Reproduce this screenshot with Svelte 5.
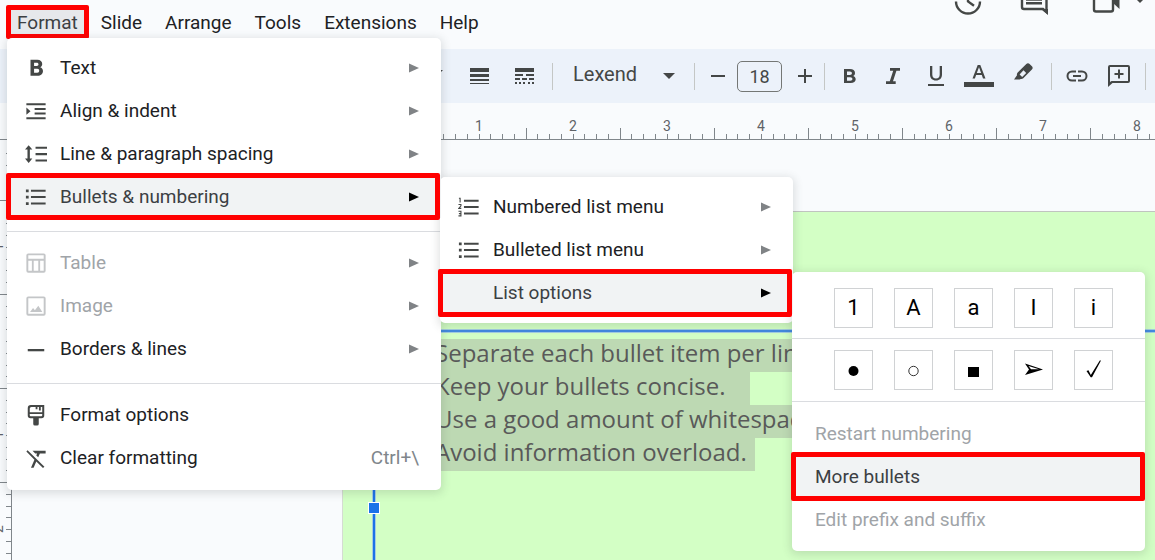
<script>
  const menus = ['Format', 'Slide', 'Arrange', 'Tools', 'Extensions', 'Help'];

  const formatMenu = [
    [
      { icon: 'bold', label: 'Text', sub: true },
      { icon: 'indent', label: 'Align & indent', sub: true },
      { icon: 'spacing', label: 'Line & paragraph spacing', sub: true },
      { icon: 'bullets', label: 'Bullets & numbering', sub: true, active: true }
    ],
    [
      { icon: 'table', label: 'Table', sub: true, disabled: true },
      { icon: 'image', label: 'Image', sub: true, disabled: true },
      { icon: 'line', label: 'Borders & lines', sub: true }
    ],
    [
      { icon: 'brush', label: 'Format options' },
      { icon: 'clear', label: 'Clear formatting', keys: 'Ctrl+\\' }
    ]
  ];

  const listMenu = [
    [
      { icon: 'numbers', label: 'Numbered list menu', sub: true },
      { icon: 'bullets', label: 'Bulleted list menu', sub: true },
      { icon: 'none', label: 'List options', sub: true, active: true }
    ]
  ];

  const optionItems = [
    { label: 'Restart numbering', disabled: true },
    { label: 'More bullets', active: true },
    { label: 'Edit prefix and suffix', disabled: true }
  ];

  const numerals = ['1', 'A', 'a', 'I', 'i'];
  const shapes = ['disc', 'circle', 'square', 'arrow', 'check'];

  const lines = [
    'Separate each bullet item per line.',
    'Keep your bullets concise.',
    'Use a good amount of whitespace.',
    'Avoid information overload.'
  ];

  const inch = 94.1;
  const hTicks = Array.from({ length: 140 }, (_, i) => i - 30).map((i) => ({
    pos: Math.round(384.4 + (i * inch) / 8),
    half: Math.abs(i % 8) === 4
  }));
  const vTicks = Array.from({ length: 100 }, (_, i) => i - 16).map((i) => ({
    pos: Math.round(201 + (i * inch) / 8),
    half: Math.abs(i % 8) === 4
  }));
  const hNumbers = [1, 2, 3, 4, 5, 6, 7, 8];
  const vNumbers = [-1, 1, 2];
</script>

{#snippet icon(name)}
  <svg class="icon" viewBox="0 0 24 24" aria-hidden="true">
    {#if name === 'bold'}
      <path fill-rule="evenodd" d="M6 3h7.500c3.200 0 5.300 1.800 5.300 4.600 0 1.700-.9 2.900-2.200 3.600 1.800.6 3 2.100 3 4.100 0 3.200-2.300 5.200-5.800 5.200H6zM9.900 6.300v3.500h2.900c1.200 0 1.900-.7 1.900-1.800s-.7-1.700-1.900-1.700zM9.900 12.900v4.200h3.500c1.300 0 2.100-.8 2.100-2.100s-.8-2.100-2.100-2.100z" />
    {:else if name === 'indent'}
      <path d="M1.500 3.500h21v2.200h-21zM10.500 8.600h12v2.200h-12zM10.500 13.700h12v2.200h-12zM1.500 18.800h21V21h-21zM1.500 8.200l4.500 4-4.500 4z" />
    {:else if name === 'spacing'}
      <path d="M11.500 4h12.500v2.300H11.500zM11.500 11h12.500v2.300H11.500zM11.500 18h12.500v2.300H11.500zM4 2.500l4 4.700H5.300v9.800H8l-4 4.700L0 17h2.700V7.200H0z" />
    {:else if name === 'bullets'}
      <path d="M6.500 4h16v2.200h-16zM6.500 11h16v2.200h-16zM6.500 18h16v2.200h-16zM1 3.700h3v3H1zM1 10.700h3v3H1zM1 17.700h3v3H1z" />
    {:else if name === 'numbers'}
      <path d="M6.500 4h16v2.200h-16zM6.500 11h16v2.200h-16zM6.500 18h16v2.200h-16z" />
      <path class="stroke-thin" d="M1 2.500h1.300V7M.5 9.300h2.700v1.400L.8 13.500h2.800M.5 16.700h2.700v5H.5M1 19.200h2" />
    {:else if name === 'table'}
      <path fill-rule="evenodd" d="M3.500 1.500h17a2 2 0 0 1 2 2v17a2 2 0 0 1-2 2h-17a2 2 0 0 1-2-2v-17a2 2 0 0 1 2-2zM3.600 3.600v3.800h16.800V3.600zM3.600 9.500v10.900h3.900V9.500zM9.500 9.500v10.900h5V9.500zM16.500 9.500v10.900h3.900V9.500z" />
    {:else if name === 'image'}
      <path fill-rule="evenodd" d="M3.500 1.500h17a2 2 0 0 1 2 2v17a2 2 0 0 1-2 2h-17a2 2 0 0 1-2-2v-17a2 2 0 0 1 2-2zM3.600 3.600v16.800h16.800V3.600zM5.500 18.500l3.300-4.300 2 2.500 3.700-4.900 4.400 6.700z" />
    {:else if name === 'line'}
      <path d="M3 12h18v2.500H3z" />
    {:else if name === 'brush'}
      <path fill-rule="evenodd" d="M6.500 1h14.500v11.500a3 3 0 0 1-3 3h-3v6.200a1.800 1.800 0 0 1-1.800 1.800h-2.400a1.800 1.800 0 0 1-1.800-1.800v-6.200H6a3 3 0 0 1-3-3V4.500A3.500 3.500 0 0 1 6.500 1zM5.200 9h13.600V3.200h-1.600V7h-2V3.200h-1.600v2.400h-2V3.200H7a1.800 1.800 0 0 0-1.800 1.800zM5.200 11v1.300c0 .6.400 1 1 1h11.600c.6 0 1-.4 1-1V11z" />
    {:else if name === 'clear'}
      <path d="M2.800 3.500l18.400 18-1.600 1.500-7.300-7.200-2.900 6.700H6.500l3.800-8.700L1.500 5zM8.200 4h14.300v3h-6.300l-1.800 4.300-2.100-2.100L13.200 7h-2z" />
    {/if}
  </svg>
{/snippet}

{#snippet menuRow(item)}
  <button class="row" class:active={item.active} disabled={item.disabled} role="menuitem" aria-haspopup={item.sub ? 'menu' : undefined}>
    {@render icon(item.icon)}
    <span class="label">{item.label}</span>
    {#if item.sub}
      <svg class="more" viewBox="0 0 10 10" aria-hidden="true"><path d="M0 .5L10 5 0 9.500z" /></svg>
    {/if}
    {#if item.keys}<kbd>{item.keys}</kbd>{/if}
  </button>
{/snippet}

<div class="app">
  <header>
    <nav aria-label="Menu bar">
      {#each menus as menu, i}
        <button class="menu-name" class:open={i === 0}>{menu}</button>
      {/each}
    </nav>
    <div class="actions">
      <button aria-label="Version history">
        <svg width="28" height="16" viewBox="0 0 28 16">
          <path class="stroke" d="M2 1.500a12 12 0 0 0 24 0M14-6v7.500l6 4.300" />
        </svg>
      </button>
      <button aria-label="Comments">
        <svg width="28" height="16" viewBox="0 0 28 16">
          <path class="stroke" d="M2-4v11a2 2 0 0 0 2 2h19l3.500 3V-4M6 3.300h16M6-.5h16" />
          <path d="M21 9h7v6z" />
        </svg>
      </button>
      <button aria-label="Join a call">
        <svg width="28" height="16" viewBox="0 0 28 16">
          <path class="stroke" d="M2-6V9.500a2 2 0 0 0 2 2h15a2 2 0 0 0 2-2V-6" />
          <path d="M21-4v7l6.500 6V-4z" />
        </svg>
        <svg class="tip" width="12" height="16" viewBox="0 0 12 16"><path d="M0-3h12L6 3z" /></svg>
      </button>
    </div>
  </header>

  <div class="toolbar" role="toolbar" aria-label="Formatting">
    <button class="tool drop" aria-label="Border options">
      <svg width="12" height="6" viewBox="0 0 12 6"><path d="M0 0h12L6 6z" /></svg>
    </button>
    <button class="tool wide" aria-label="Border weight">
      <svg width="20" height="18" viewBox="0 0 20 18"><path d="M0 1h19v4H0zM0 7h19v3H0zM0 12h19v2H0zM0 16h19v1H0z" /></svg>
    </button>
    <button class="tool wide" aria-label="Border dash">
      <svg width="20" height="18" viewBox="0 0 20 18"><path d="M0 1h19v4H0zM0 7h8v2H0zM11 7h8v2h-8zM0 11h5v2H0zM7 11h5v2H7zM14 11h5v2h-5zM0 15h2v2H0zM4 15h2v2H4zM8 15h2v2H8zM13 15h2v2h-2zM17 15h2v2h-2z" /></svg>
    </button>
    <span class="bar"></span>
    <div class="font">
      <select aria-label="Font"><option>Lexend</option></select>
      <svg width="12" height="6" viewBox="0 0 12 6" aria-hidden="true"><path d="M0 0h12L6 6z" /></svg>
    </div>
    <span class="bar"></span>
    <button class="tool step" aria-label="Decrease font size">
      <svg width="14" height="14" viewBox="0 0 14 14"><path d="M0 6h14v2H0z" /></svg>
    </button>
    <input class="size" aria-label="Font size" value="18" />
    <button class="tool step plus" aria-label="Increase font size">
      <svg width="14" height="14" viewBox="0 0 14 14"><path d="M0 6h6V0h2v6h6v2H8v6H6V8H0z" /></svg>
    </button>
    <span class="bar"></span>
    <button class="tool bold" aria-label="Bold">
      <svg width="12" height="16" viewBox="0 0 12 16"><path fill-rule="evenodd" d="M0 1h6c3 0 5 1.500 5 4 0 1.500-.7 2.500-1.800 3 1.500.5 2.500 1.700 2.500 3.300 0 2.400-2 3.700-5 3.700H0zM3 3.400v3.500h2.900c1.300 0 2-.7 2-1.700s-.7-1.800-2-1.800zM3 9.200v3.500h3.300c1.300 0 2.100-.7 2.100-1.700 0-1.100-.8-1.800-2.100-1.800z" /></svg>
    </button>
    <button class="tool" aria-label="Italic">
      <svg width="14" height="18" viewBox="0 0 14 18"><path d="M4 1h10v2.700h-3.600L7 14.300h2.700V17H0v-2.700h3.800L7.200 3.700H4z" /></svg>
    </button>
    <button class="tool" aria-label="Underline">
      <svg width="16" height="20" viewBox="0 0 16 20"><path d="M0 18h16v2H0zM2 0h2.300v8.500c0 2.500 1.300 4 3.700 4s3.700-1.500 3.700-4V0H14v8.600c0 3.800-2.300 6-6 6s-6-2.200-6-6z" /></svg>
    </button>
    <button class="tool color" aria-label="Text color">
      <svg width="30" height="22" viewBox="0 0 30 22"><path d="M0 17h30v5H0z" /><path fill-rule="evenodd" d="M13.700 0h2.600l5.200 13.500h-2.500l-1.200-3.400h-5.700l-1.200 3.400H8.500zM12.800 8.100h4.300L15 2.200z" /></svg>
    </button>
    <button class="tool highlight" aria-label="Highlight color">
      <svg width="20" height="24" viewBox="0 0 20 24"><path fill-rule="evenodd" d="M0 16.500l3-4.300c-.3-1 0-1.800.7-2.600L12.300 1c1-1 2.400-1 3.300 0l2.300 2.300c1 1 1 2.300 0 3.300l-8.600 8.700c-.8.700-1.700 1-2.600.7l-1 .5zM6.700 10.200l-1.100 1.200 2.600 2.600 4-4-2.700-2.700z" /></svg>
    </button>
    <span class="bar"></span>
    <button class="tool link" aria-label="Insert link">
      <svg width="22" height="12" viewBox="0 0 22 12"><path d="M10 .5v2H6a3.500 3.500 0 0 0 0 7h4v2H6a5.500 5.500 0 0 1 0-11zM12 .5h4a5.500 5.500 0 0 1 0 11h-4v-2h4a3.500 3.500 0 0 0 0-7h-4zM7 5h8v2H7z" /></svg>
    </button>
    <button class="tool link" aria-label="Add comment">
      <svg width="22" height="22" viewBox="0 0 22 22"><path fill-rule="evenodd" d="M2 0h18a2 2 0 0 1 2 2v14a2 2 0 0 1-2 2H4.500L0 22V2a2 2 0 0 1 2-2zM2 2v15l1.500-1H20V2z" /><path d="M10 4.500h2V8h3.500v2H12v3.500h-2V10H6.500V8H10z" /></svg>
    </button>
    <span class="bar"></span>
  </div>

  <svg class="ruler" aria-hidden="true">
    <rect x="0" y="36" width="100%" height="1" />
    {#each hTicks as t}
      <rect x={t.pos} y={t.half ? 25 : 31} width="1" height={t.half ? 11 : 5} />
    {/each}
    {#each hNumbers as n}
      <text x={Math.round(384.4 + n * inch)} y="28" text-anchor="middle">{n}</text>
    {/each}
  </svg>

  <div class="workspace">
    <svg class="side" aria-hidden="true">
      <rect x="11" y="0" width="1" height="100%" />
      {#each vTicks as t}
        <rect x={t.half ? 0 : 6} y={t.pos} width={t.half ? 11 : 5} height="1" />
      {/each}
      {#each vNumbers as n}
        <text transform="translate(3 {Math.round(201 + n * inch)}) rotate(-90)" text-anchor="middle">{Math.abs(n)}</text>
      {/each}
    </svg>
    <main>
      <div class="slide">
        <div class="textbox">
          <span class="handle"></span>
          {#each lines as line}
            <p><span>{line}</span></p>
          {/each}
        </div>
      </div>
    </main>
  </div>

  <div class="popup format" role="menu" aria-label="Format">
    {#each formatMenu as group}
      <div class="group">
        {#each group as item}{@render menuRow(item)}{/each}
      </div>
    {/each}
  </div>

  <div class="popup lists" role="menu" aria-label="Bullets and numbering">
    {#each listMenu as group}
      <div class="group">
        {#each group as item}{@render menuRow(item)}{/each}
      </div>
    {/each}
  </div>

  <div class="popup options" role="menu" aria-label="List options">
    <div class="palette">
      {#each numerals as n}<button class="cell">{n}</button>{/each}
    </div>
    <div class="palette">
      {#each shapes as s}
        <button class="cell" aria-label={s}>
          <svg width="21" height="22" viewBox="0 0 21 22">
            {#if s === 'disc'}<circle cx="10.500" cy="12" r="5" />
            {:else if s === 'circle'}<circle class="hollow" cx="10.500" cy="12" r="4.700" />
            {:else if s === 'square'}<path d="M5 8h11v10H5z" />
            {:else if s === 'arrow'}<path fill-rule="evenodd" d="M2 4.500l18 6L2 16l4-5.500zM5.500 7l2.500 3.200h8z" />
            {:else}<path d="M3.500 12l2-.8 2.300 4.900L16.800 1.500H18L9 18.200H7.700z" />{/if}
          </svg>
        </button>
      {/each}
    </div>
    <div class="choices">
      {#each optionItems as item}
        <button class="row" class:active={item.active} disabled={item.disabled} role="menuitem">
          <span class="label">{item.label}</span>
        </button>
      {/each}
    </div>
  </div>
</div>

<style>
  :global(body) {
    margin: 0;
  }
  .app {
    position: relative;
    display: flex;
    flex-direction: column;
    height: 100vh;
    overflow: hidden;
    background: #f9fbfd;
    color: #202124;
    font: 19px/24px Roboto, sans-serif;
  }
  button,
  input,
  select {
    box-sizing: border-box;
    margin: 0;
    padding: 0;
    border: 0;
    background: none;
    color: inherit;
    font: inherit;
  }
  svg {
    display: block;
    flex: none;
    fill: #444746;
  }

  header {
    display: flex;
    flex: none;
    justify-content: space-between;
    height: 49px;
  }
  nav {
    display: flex;
    gap: 1px;
    align-items: flex-start;
    padding: 5px 0 0 6px;
  }
  .menu-name {
    height: 34px;
    padding: 1px 11px 0;
    border-radius: 4px;
  }
  .menu-name.open {
    position: relative;
    background: #e6e8eb;
    color: #3c4043;
  }
  .menu-name.open::after {
    content: '';
    position: absolute;
    inset: 0;
    border: 5px solid #f00;
    border-radius: 2px;
  }
  .actions {
    display: flex;
    gap: 38px;
    align-items: flex-start;
    padding-right: 9px;
  }
  .actions button {
    display: flex;
    gap: 14px;
  }
  .actions button:last-child {
    margin-left: 6px;
  }
  .stroke {
    fill: none;
    stroke: #444746;
    stroke-width: 2.4;
  }
  .stroke-thin {
    fill: none;
    stroke: #444746;
    stroke-width: 1.2;
  }

  .toolbar {
    display: flex;
    flex: none;
    align-items: center;
    height: 54px;
    padding-left: 417px;
    background: #ecf2fa;
    color: #444746;
  }
  .tool {
    display: flex;
    flex: none;
    align-items: center;
    justify-content: center;
    width: 43px;
    height: 40px;
  }
  .tool.drop {
    width: 40px;
    padding-bottom: 6px;
  }
  .tool.wide,
  .tool.highlight {
    width: 45px;
  }
  .tool.color {
    width: 44px;
  }
  .tool.highlight {
    align-items: flex-start;
    padding-top: 7px;
  }
  .tool.link,
  .tool.bold {
    width: 42px;
  }
  .tool.step {
    width: 37px;
  }
  .tool.plus {
    padding-left: 8px;
  }
  .bar {
    flex: none;
    width: 1px;
    height: 27px;
    margin: 0 4px 0 5px;
    background: #c4c7c5;
  }
  .font {
    display: grid;
    flex: none;
    align-items: center;
    width: 132px;
  }
  .font > * {
    grid-area: 1 / 1;
  }
  .font select {
    width: 100%;
    height: 38px;
    padding: 0 0 4px 16px;
    appearance: none;
    font-size: 20px;
  }
  .font svg {
    justify-self: end;
    margin-right: 14px;
    pointer-events: none;
  }
  .size {
    flex: none;
    width: 45px;
    height: 31px;
    margin-left: 1px;
    border: 1px solid #747775;
    border-radius: 5px;
    font-size: 18px;
    text-align: center;
  }

  .ruler {
    width: 100%;
    height: 37px;
  }
  .ruler rect,
  .side rect {
    fill: #80868b;
    shape-rendering: crispEdges;
  }
  .ruler text,
  .side text {
    fill: #5f6368;
    font-size: 14px;
  }
  .workspace {
    display: flex;
    flex: 1;
    min-height: 0;
  }
  .side {
    width: 12px;
    height: 100%;
  }
  main {
    display: flex;
    flex: 1;
    min-width: 0;
    padding: 71px 0 0 330px;
  }
  .slide {
    flex: 1;
    min-width: 0;
    padding: 118px 0 0 30px;
    border-top: 1px solid #c0c4c0;
    border-left: 1px solid #d5dcd3;
    background: #d3ffc5;
  }
  .textbox {
    position: relative;
    box-sizing: border-box;
    height: 100%;
    padding: 7px 0 0 60px;
    border-top: 2px solid #438ae0;
    border-left: 2px solid #1a73e8;
    box-shadow: 0 0 0 1px #a3cde0, inset 1px 1px #a3cde0;
    color: #595959;
    font: 24px/28px 'Open Sans', sans-serif;
  }
  .handle {
    position: absolute;
    top: 170px;
    left: -7px;
    width: 10px;
    height: 10px;
    border: 1px solid #fff;
    background: #1a73e8;
  }
  p {
    display: flex;
    margin: 0;
    white-space: nowrap;
  }
  p span {
    padding: 0 8px 5px 0;
    background: #bdd9b3;
  }
  p:nth-of-type(2) span {
    padding-right: 25px;
  }

  .popup {
    position: absolute;
    box-sizing: border-box;
    border-radius: 5px;
    background: #fff;
    box-shadow: 0 2px 8px 2px rgba(60, 64, 67, 0.15);
  }
  .format {
    top: 38px;
    left: 7px;
    width: 434px;
    padding: 8px 0 11px;
  }
  .lists {
    top: 177px;
    left: 440px;
    width: 353px;
    padding: 8px 0 9px;
  }
  .options {
    top: 272px;
    left: 792px;
    width: 353px;
    padding: 8px 0 10px;
  }
  .group + .group {
    margin-top: 13px;
    padding-top: 9px;
    border-top: 1px solid #dadce0;
  }
  .row {
    position: relative;
    display: flex;
    align-items: center;
    width: 100%;
    height: 43px;
    padding: 0 22px 0 18px;
    text-align: left;
  }
  .row .icon {
    width: 22px;
    height: 22px;
    margin-right: 13px;
  }
  .label {
    flex: 1;
  }
  .more {
    width: 10px;
    height: 10px;
    fill: #808386;
  }
  kbd {
    color: #80868b;
    font: inherit;
  }
  .row:disabled {
    color: #a0a4a8;
  }
  .row:disabled .icon {
    fill: #c4c6c8;
  }
  .row.active {
    z-index: 1;
    background: #f1f3f4;
    color: #3c4043;
  }
  .row.active .more {
    fill: #000;
  }
  .row.active::after {
    content: '';
    position: absolute;
    inset: -2px 1px -2px -1px;
    border: 5px solid #f00;
    border-radius: 2px;
  }
  .lists .row.active::after {
    inset: -2px 1px -3px -2px;
  }
  .options .row.active::after {
    inset: -3px 0 -3px -1px;
  }
  .palette {
    display: flex;
    gap: 21px;
    padding: 8px 32px 10px 42px;
    border-bottom: 1px solid #dadce0;
  }
  .palette + .palette {
    padding: 11px 32px 11px 42px;
  }
  .cell {
    display: flex;
    flex: 1;
    align-items: center;
    justify-content: center;
    height: 40px;
    border: 1px solid #d0d2d4;
    color: #000;
    font-size: 22px;
  }
  .cell svg {
    fill: #000;
  }
  .cell .hollow {
    fill: none;
    stroke: #333;
  }
  .choices {
    padding-top: 10px;
  }
  .choices .row {
    padding-left: 23px;
  }
</style>
